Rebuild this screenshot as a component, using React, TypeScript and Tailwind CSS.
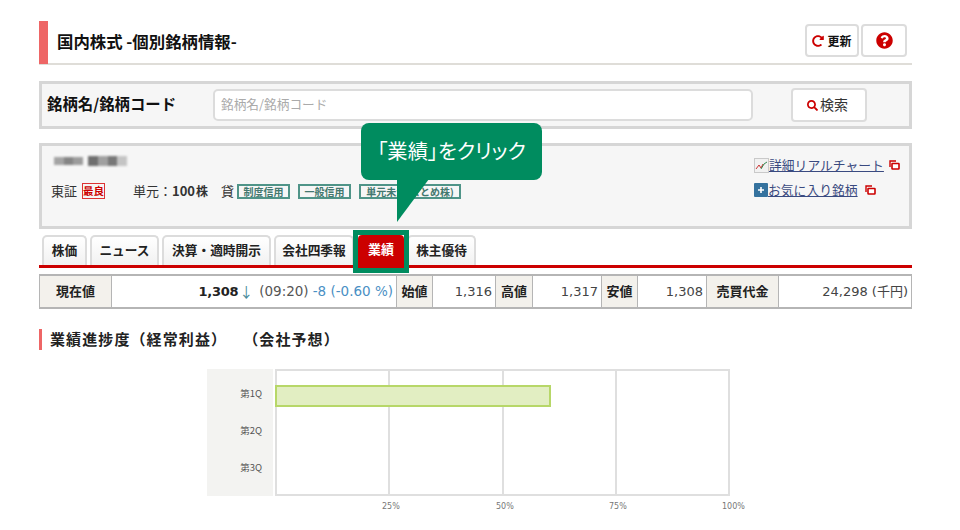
import { FaRedoAlt, FaQuestionCircle, FaSearch } from "react-icons/fa";

const tabs = [
  { label: "株価", w: "w-[45px]" },
  { label: "ニュース", w: "w-[69px]" },
  { label: "決算・適時開示", w: "w-[109px]" },
  { label: "会社四季報", w: "w-[80px]" },
  { label: "業績", w: "w-[46px]", active: true },
  { label: "株主優待", w: "w-[69px]" },
];

const creditTags = [
  { label: "制度信用", w: "w-[53px]" },
  { label: "一般信用", w: "w-[53px]" },
  { label: "単元未満(まとめ株)", w: "w-[102px]" },
];

function WindowIcon() {
  return (
    <svg width="11" height="11" viewBox="0 0 11 11" className="shrink-0">
      <path d="M1 7V1h6" fill="none" stroke="#cc0000" strokeWidth="1.4" />
      <rect x="3" y="3.5" width="7" height="5.5" rx="0.5" fill="#fff" stroke="#cc0000" strokeWidth="1.6" />
    </svg>
  );
}

function ChartIcon() {
  return (
    <svg width="15" height="15" viewBox="0 0 15 15" className="shrink-0">
      <rect x="0.5" y="0.5" width="14" height="14" fill="#f1f1f1" stroke="#c9c9c9" />
      <path d="M2 11l3-4 2 3 2-4" fill="none" stroke="#cc3333" strokeWidth="1" />
      <path d="M7 11l3-5 3-2" fill="none" stroke="#33884f" strokeWidth="1" />
    </svg>
  );
}

function PlusIcon() {
  return (
    <svg width="14" height="14" viewBox="0 0 14 14" className="shrink-0">
      <rect width="14" height="14" rx="1" fill="#35729e" />
      <path d="M7 4v6M4 7h6" stroke="#fff" strokeWidth="1.6" />
    </svg>
  );
}

function PriceHead({ children, w }: { children: React.ReactNode; w: string }) {
  return (
    <div className={`${w} shrink-0 flex items-center justify-center bg-[#f3f1ec] border-r border-[#b5b5b5] text-[13px] font-bold text-[#222]`}>
      {children}
    </div>
  );
}

function PriceValue({ children, w }: { children: React.ReactNode; w: string }) {
  return (
    <div className={`${w} shrink-0 flex items-center justify-end pr-[3px] border-r border-[#b5b5b5] text-[13px] text-[#444]`}>
      {children}
    </div>
  );
}

export default function App() {
  return (
    <div className="relative w-[960px] h-[530px] overflow-hidden bg-white font-['DejaVu_Sans','Noto_Sans_CJK_JP',sans-serif] text-[#222]">
      <div className="w-[873px] ml-[39px] pt-[22px]">
        {/* page title */}
        <div className="flex items-center justify-between h-[43px] border-b-2 border-[#dfddd8]">
          <div className="flex items-center h-full">
            <div className="w-[9px] h-[43px] bg-[#ee6666]" />
            <h1 className="ml-[9px] pb-[2px] text-[16.4px] font-bold text-[#111] font-['Noto_Sans_CJK_JP',sans-serif]">国内株式 -個別銘柄情報-</h1>
          </div>
          <div className="flex gap-[2px] mr-[5px] mb-[4px]">
            <button className="flex items-center justify-center gap-[3px] w-[54px] h-[33px] bg-white border-2 border-[#dcdcdc] rounded-[4px] text-[12px] font-bold text-[#111] font-['Noto_Sans_CJK_JP',sans-serif]">
              <FaRedoAlt className="text-[#cc0000] text-[12px]" />
              更新
            </button>
            <button className="flex items-center justify-center w-[46px] h-[33px] bg-white border-2 border-[#dcdcdc] rounded-[4px]">
              <FaQuestionCircle className="text-[#cc0000] text-[17px]" />
            </button>
          </div>
        </div>

        {/* search */}
        <div className="flex items-center h-[48px] mt-[16px] bg-[#f6f6f6] border-[3px] border-[#d6d6d6]">
          <label className="w-[171px] pl-[5px] pb-[2px] text-[15.4px] font-bold text-[#111] font-['Noto_Sans_CJK_JP',sans-serif]">銘柄名/銘柄コード</label>
          <div className="flex items-center w-[540px] h-[32px] px-[6px] pb-[2px] bg-white border-2 border-[#dcdcdc] rounded-[5px] text-[12.7px] text-[#aaa] font-['Noto_Sans_CJK_JP',sans-serif]">
            銘柄名/銘柄コード
          </div>
          <button className="flex items-center justify-center gap-[2px] pr-[3px] pb-[2px] ml-[38px] w-[76px] h-[34px] bg-white border-2 border-[#dcdcdc] rounded-[4px] text-[14px] text-[#333] font-['Noto_Sans_CJK_JP',sans-serif]">
            <FaSearch className="text-[#cc0000] text-[11px] mt-[3px]" />
            検索
          </button>
        </div>

        {/* stock info */}
        <div className="flex justify-between h-[86px] mt-[14px] bg-[#f6f6f6] border-[3px] border-[#d6d6d6]">
          <div className="pl-[9px] pt-[8px]">
            <div className="flex gap-[5px] h-[14px] ml-[3px] blur-[1px]">
              <div className="flex w-[29px] h-[8px] mt-[3px]">
                <div className="flex-1 bg-[#a4a4a4]" />
                <div className="flex-1 bg-[#858585]" />
                <div className="flex-1 bg-[#9c9c9c]" />
              </div>
              <div className="flex w-[39px] h-[10px] mt-[2px]">
                <div className="flex-1 bg-[#6f6f6f]" />
                <div className="flex-1 bg-[#a0a0a0]" />
                <div className="flex-1 bg-[#787878]" />
                <div className="flex-1 bg-[#c4c4c4]" />
              </div>
            </div>
            <div className="flex items-center mt-[13px] h-[20px] text-[13px] text-[#333] font-['Noto_Sans_CJK_JP',sans-serif]">
              <span>東証</span>
              <span className="ml-[5px] w-[23px] text-center h-[16px] leading-[14px] border border-[#dd3333] text-[10.5px] font-bold text-[#cc0000]">最良</span>
              <span className="ml-[28px]">単元：</span>
              <span className="font-bold">100</span>
              <span className="font-bold ml-[1px] text-[12px]">株</span>
              <span className="ml-[13px]">貸</span>
              <div className="flex gap-[8px] ml-[3px]">
                {creditTags.map((tag) => (
                  <span key={tag.label} className={`${tag.w} text-center h-[15px] leading-[11px] border-2 border-[#4f9488] text-[10px] font-bold text-[#43786f] whitespace-nowrap`}>
                    {tag.label}
                  </span>
                ))}
              </div>
            </div>
          </div>
          <div className="w-[155px] pt-[9px] text-[12.8px] text-[#3a4a80] font-['Noto_Sans_CJK_JP',sans-serif]">
            <div className="flex items-center h-[20px]">
              <ChartIcon />
              <a className="underline whitespace-nowrap">詳細リアルチャート</a>
              <span className="ml-[5px]"><WindowIcon /></span>
            </div>
            <div className="flex items-center h-[20px] mt-[5px]">
              <PlusIcon />
              <a className="underline whitespace-nowrap">お気に入り銘柄</a>
              <span className="ml-[7px]"><WindowIcon /></span>
            </div>
          </div>
        </div>

        {/* tabs */}
        <div className="flex gap-[3px] h-[33px] mt-[6px] pl-[3px] border-b-[3px] border-[#cc0000]">
          {tabs.map((tab) =>
            tab.active ? (
              <div key={tab.label} className={`${tab.w} ml-[1px] h-[30px] flex items-center justify-center pb-[3px] rounded-t-[4px] bg-[#cc0000] text-[13px] font-bold text-white font-['Noto_Sans_CJK_JP',sans-serif]`}>
                {tab.label}
              </div>
            ) : (
              <div key={tab.label} className={`${tab.w} h-[30px] flex items-center justify-center pb-[3px] rounded-t-[5px] border-2 border-b-0 border-[#dcdcdc] bg-gradient-to-b from-white to-[#f1f1f1] text-[12.7px] font-bold text-[#222] font-['Noto_Sans_CJK_JP',sans-serif]`}>
                {tab.label}
              </div>
            )
          )}
        </div>

        {/* price row */}
        <div className="flex h-[35px] mt-[6px] border-y-2 border-l border-[#b5b5b5] border-r">
          <PriceHead w="w-[72px]">現在値</PriceHead>
          <div className="w-[285px] shrink-0 flex items-center justify-end pr-[3px] border-r border-[#b5b5b5] text-[13.5px] whitespace-nowrap">
            <span className="font-bold text-[13px] tracking-[-0.3px] text-[#222]">1,308</span>
            <span className="text-[#4a8a9a] text-[14px] ml-[1px] font-['Noto_Sans_CJK_JP',sans-serif] w-[12px] text-center">↓</span>
            <span className="ml-[8px] text-[#555]">(09:20)</span>
            <span className="ml-[4px] text-[#4a8fc4]">-8 (-0.60 %)</span>
          </div>
          <PriceHead w="w-[36px]">始値</PriceHead>
          <PriceValue w="w-[63px]">1,316</PriceValue>
          <PriceHead w="w-[37px]">高値</PriceHead>
          <PriceValue w="w-[69px]">1,317</PriceValue>
          <PriceHead w="w-[36px]">安値</PriceHead>
          <PriceValue w="w-[69px]">1,308</PriceValue>
          <PriceHead w="w-[72px]">売買代金</PriceHead>
          <div className="flex-1 flex items-center justify-end pr-[3px] text-[13px] text-[#444]">24,298 (千円)</div>
        </div>

        {/* progress heading */}
        <div className="flex items-center h-[21px] mt-[20px] border-l-[3px] border-[#ee6666]">
          <h2 className="ml-[8px] text-[15px] font-bold tracking-[1.1px] text-[#222] whitespace-pre [text-spacing-trim:space-all] font-['Noto_Sans_CJK_JP',sans-serif]">業績進捗度（経常利益）　（会社予想）</h2>
        </div>

        {/* chart */}
        <div className="flex mt-[19px] ml-[168px]">
          <div className="w-[66px] h-[127px] mr-[2px] flex flex-col items-end pr-[11px] pt-[16px] gap-[20px] bg-[#f3f3f1] text-[9.5px] text-[#555] font-['Noto_Sans_CJK_JP',sans-serif]">
            <span className="h-[17px] leading-[17px]">第1Q</span>
            <span className="h-[17px] leading-[17px]">第2Q</span>
            <span className="h-[17px] leading-[17px]">第3Q</span>
          </div>
          <div className="relative w-[455px] h-[127px] border-2 border-[#dfdfdf]">
            <div className="absolute left-[111px] top-0 bottom-0 w-[2px] bg-[#dfdfdf]" />
            <div className="absolute left-[225px] top-0 bottom-0 w-[2px] bg-[#dfdfdf]" />
            <div className="absolute left-[338px] top-0 bottom-0 w-[2px] bg-[#dfdfdf]" />
            <div className="absolute -left-[2px] top-[14px] w-[276px] h-[22px] bg-[#e2eec2] border-2 border-[#b7d768]" />
            <span className="absolute left-[105px] top-[130px] text-[8px] text-[#777]">25%</span>
            <span className="absolute left-[219px] top-[130px] text-[8px] text-[#777]">50%</span>
            <span className="absolute left-[332px] top-[130px] text-[8px] text-[#777]">75%</span>
            <span className="absolute left-[445px] top-[130px] text-[8px] text-[#777]">100%</span>
          </div>
        </div>
      </div>

      {/* callout overlay */}
      <div className="absolute left-[353px] top-[230px] w-[56px] h-[43px] border-[5px] border-[#008c5f]" />
      <div className="absolute left-[361px] top-[123px] w-[181px] h-[57px] flex items-center justify-center pb-[3px] rounded-[8px] bg-[#008c5f] text-[20.3px] font-normal [font-feature-settings:'palt'] text-white font-['Noto_Sans_CJK_JP',sans-serif]">
        「業績」をクリック
      </div>
      <svg className="absolute left-[396px] top-[179px]" width="34" height="44" viewBox="0 0 34 44">
        <path d="M1 0h32L1 43z" fill="#008c5f" />
      </svg>
    </div>
  );
}
